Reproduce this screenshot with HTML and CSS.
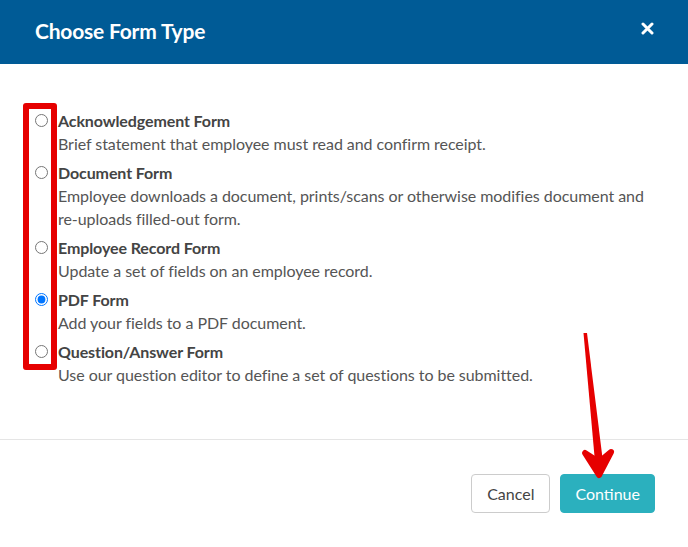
FILE: index.html
```html
<!DOCTYPE html>
<html lang="en">
<head>
  <meta charset="UTF-8">
  <meta name="viewport" content="width=device-width, initial-scale=1.0">
  <title>Choose Form Type</title>
  <link rel="stylesheet" href="styles.css">
</head>
<body>
  <div class="modal">
    <!-- Header -->
    <header class="modal-header">
      <h1 class="modal-title">Choose Form Type</h1>
      <button type="button" class="close" aria-label="Close">
        <svg width="13" height="13" viewBox="0 0 13 13">
          <path d="M2 2 L11 11 M11 2 L2 11" stroke="#fff" stroke-width="3" stroke-linecap="round"/>
        </svg>
      </button>
    </header>

    <!-- Form type list -->
    <div class="modal-body">
      <label class="option">
        <input type="radio" name="formType" value="ack">
        <span class="option-text">
          <span class="option-title">Acknowledgement Form</span>
          <span class="option-desc">Brief statement that employee must read and confirm receipt.</span>
        </span>
      </label>
      <label class="option">
        <input type="radio" name="formType" value="document">
        <span class="option-text">
          <span class="option-title">Document Form</span>
          <span class="option-desc">Employee downloads a document, prints/scans or otherwise modifies document and re-uploads filled-out form.</span>
        </span>
      </label>
      <label class="option">
        <input type="radio" name="formType" value="record">
        <span class="option-text">
          <span class="option-title">Employee Record Form</span>
          <span class="option-desc">Update a set of fields on an employee record.</span>
        </span>
      </label>
      <label class="option">
        <input type="radio" name="formType" value="pdf" checked>
        <span class="option-text">
          <span class="option-title">PDF Form</span>
          <span class="option-desc">Add your fields to a PDF document.</span>
        </span>
      </label>
      <label class="option">
        <input type="radio" name="formType" value="qa">
        <span class="option-text">
          <span class="option-title">Question/Answer Form</span>
          <span class="option-desc">Use our question editor to define a set of questions to be submitted.</span>
        </span>
      </label>
    </div>

    <!-- Footer buttons -->
    <footer class="modal-footer">
      <button type="button" class="btn btn-default">Cancel</button>
      <button type="button" class="btn btn-primary">Continue</button>
    </footer>

    <!-- Annotation overlay -->
    <div class="mark-box"></div>
    <svg class="mark-arrow" width="688" height="547" viewBox="0 0 688 547">
      <polygon points="583.5,333 587,333 603,462 595,462" fill="#e60000"/>
      <polygon points="585,453 599,475 611,452 599,462" fill="#e60000" stroke="#e60000" stroke-width="6" stroke-linejoin="round"/>
    </svg>
  </div>
</body>
</html>
```

FILE: styles.css
```css
/* General */
body {
  margin: 0;
  padding: 0;
  font-family: Lato, "Open Sans", Arial, sans-serif;
  background: #fff;
}

.modal {
  position: relative;
  width: 688px;
  height: 547px;
  overflow: hidden;
}

/* Header */
.modal-header {
  height: 64px;
  background-color: #005b96;
  display: flex;
  align-items: center;
  justify-content: space-between;
  padding: 0 34px 0 35px;
  box-sizing: border-box;
}

.modal-title {
  margin: -3px 0 0;
  color: #fff;
  font-size: 21px;
  font-weight: bold;
  letter-spacing: -0.2px;
}

.close {
  background: none;
  border: none;
  padding: 0;
  display: flex;
  margin-top: -8px;
  cursor: pointer;
}

/* Body */
.modal-body {
  display: flex;
  flex-direction: column;
  gap: 6px;
  padding: 45px 35px 53px;
}

.option {
  display: grid;
  grid-template-columns: 13px 1fr;
  column-gap: 10px;
  font-size: 16px;
  line-height: 23px;
  cursor: pointer;
}

.option input {
  margin: 5px 0 0;
  width: 13px;
  height: 13px;
}

.option-text {
  display: flex;
  flex-direction: column;
}

.option-title {
  font-weight: bold;
  color: #444;
  letter-spacing: -0.1px;
}

.option-desc {
  color: #555;
  letter-spacing: -0.05px;
}

/* Footer */
.modal-footer {
  border-top: 1px solid #e5e5e5;
  display: flex;
  justify-content: flex-end;
  gap: 10px;
  padding: 34px 33px;
}

.btn {
  height: 39px;
  padding: 0 15px;
  font-family: inherit;
  font-size: 16px;
  border-radius: 4px;
  cursor: pointer;
}

.btn-default {
  background: #fff;
  color: #444;
  border: 1px solid #ccc;
}

.btn-primary {
  padding: 0 14px;
  background: #2bb0be;
  color: #fff;
  border: 1px solid #2bb0be;
}

/* Annotation */
.mark-box {
  position: absolute;
  left: 23px;
  top: 103px;
  width: 22px;
  height: 255px;
  border: 6px solid #e60000;
  border-radius: 3px;
}

.mark-arrow {
  position: absolute;
  left: 0;
  top: 0;
  pointer-events: none;
}
```
